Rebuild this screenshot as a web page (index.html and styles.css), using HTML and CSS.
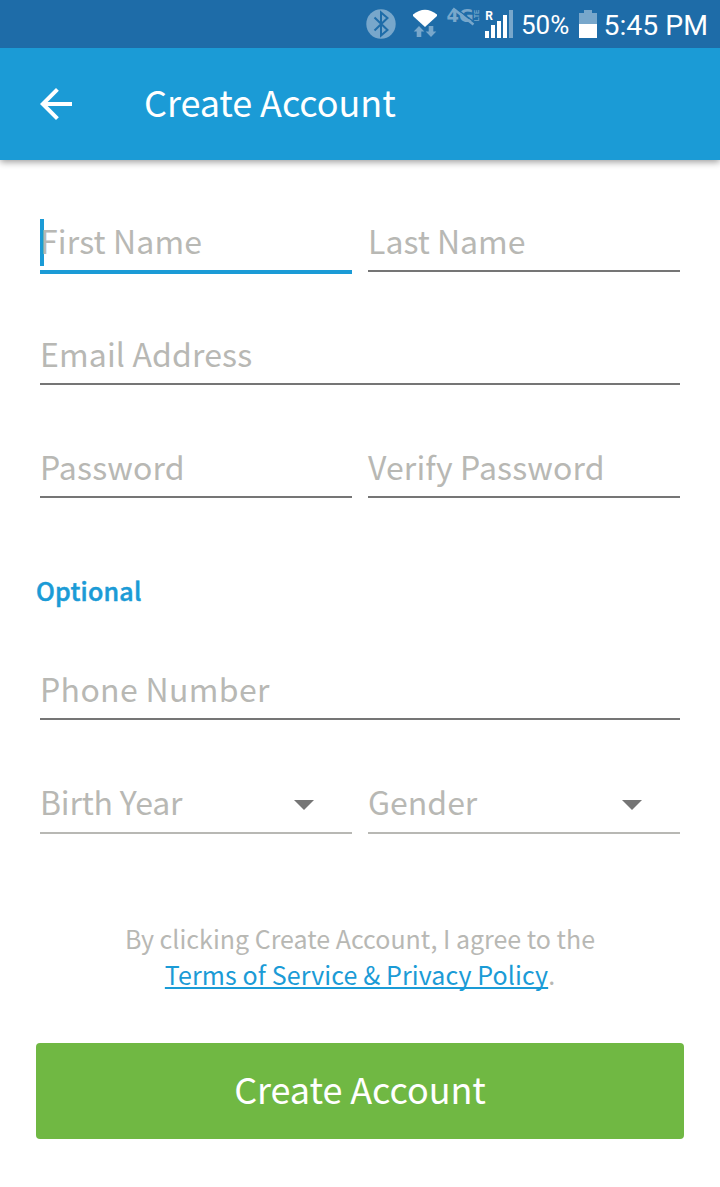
FILE: index.html
```html
<!DOCTYPE html>
<html lang="en">
<head>
<meta charset="utf-8">
<title>Create Account</title>
<link rel="stylesheet" href="styles.css">
</head>
<body>
<div class="statusbar">
  <svg class="status-icons" width="150" height="48" viewBox="365 0 150 48">
    <g class="dim">
      <circle cx="381" cy="24" r="14.7"/>
      <path class="bluetooth" d="M374.5 17.5 L387.5 30 L381 35.5 V12.5 L387.5 18 L374.5 30.5"/>
      <path d="M419 26 L424.300 31.500 H421.300 V37 H416.700 V31.500 H413.700 Z"/>
      <path d="M431 37 L436.300 31.500 H433.300 V26 H428.700 V31.500 H425.700 Z"/>
      <text class="net" x="446.500" y="22" textLength="27" lengthAdjust="spacingAndGlyphs">4G</text>
      <text class="lte" transform="translate(479.300 21.300) rotate(-90)" textLength="11.500" lengthAdjust="spacingAndGlyphs">LTE</text>
      <rect x="509" y="10" width="4" height="28"/>
    </g>
    <path class="slash-gap" d="M456 8.500 L475.500 23"/>
    <path class="slash" d="M453 8.500 L473.500 24.500"/>
    <path class="lit" d="M413 14.500 Q425 5 437 14.500 V16 L425 27 L413 16 Z"/>
    <text class="roam" x="485.200" y="20">R</text>
    <path class="lit" d="M485 31h4v7h-4z M491 25h4v13h-4z M497 21h4v17h-4z M503 15h4v23h-4z"/>
  </svg>
  <span class="percent">50%</span>
  <svg class="battery" width="18" height="28" viewBox="0 0 18 28">
    <path class="dim" d="M5 0h8v3h5v11H0V3h5z"/>
    <path class="lit" d="M0 14h18v14H0z"/>
  </svg>
  <span class="time">5:45 PM</span>
</div>
<header class="appbar">
  <svg class="back" width="32" height="32" viewBox="4 4 16 16"><path d="M20 11H7.830l5.590-5.590L12 4l-8 8 8 8 1.410-1.410L7.830 13H20v-2z"/></svg>
  <h1 class="title">Create Account</h1>
</header>
<main class="form">
  <div class="row">
    <div class="field focused"><span class="hint">First Name</span></div>
    <div class="field last"><span class="hint">Last Name</span></div>
  </div>
  <div class="row"><div class="field"><span class="hint">Email Address</span></div></div>
  <div class="row">
    <div class="field"><span class="hint">Password</span></div>
    <div class="field"><span class="hint">Verify Password</span></div>
  </div>
  <h2 class="section">Optional</h2>
  <div class="row"><div class="field phone"><span class="hint">Phone Number</span></div></div>
  <div class="row selects">
    <div class="field select birth"><span class="hint">Birth Year</span><svg class="arrow" width="20" height="10" viewBox="0 0 20 10"><path d="M0 0h20L10 10z"/></svg></div>
    <div class="field select last"><span class="hint">Gender</span><svg class="arrow" width="20" height="10" viewBox="0 0 20 10"><path d="M0 0h20L10 10z"/></svg></div>
  </div>
  <p class="legal">By clicking Create Account, I agree to the<br><a class="terms">Terms of Service &amp; Privacy Policy</a>.</p>
  <button class="submit">Create Account</button>
</main>
</body>
</html>
```
FILE: styles.css
```css
* { box-sizing: border-box; }
body {
  margin: 0;
  background: #fff;
  font-family: "Noto Sans CJK SC", "Noto Sans", sans-serif;
}
.statusbar {
  display: flex;
  height: 48px;
  padding-left: 365px;
  background: #1e6ca8;
  color: #fff;
  font-family: Roboto, sans-serif;
  white-space: nowrap;
}
.status-icons { flex: none; }
.dim { fill: #78a7cb; }
.lit { fill: #fff; }
.bluetooth { fill: none; stroke: #1e6ca8; stroke-width: 2; }
.net { font: bold 18px "DejaVu Sans", sans-serif; }
.lte { font: bold 7px "Liberation Sans", sans-serif; }
.roam { font: bold 12px Roboto, sans-serif; fill: #fff; }
.slash { stroke: #78a7cb; stroke-width: 2.5; }
.slash-gap { stroke: #1e6ca8; stroke-width: 1.5; }
.percent { width: 58px; margin-left: 6px; font-size: 26px; line-height: 51px; }
.battery { flex: none; margin-top: 10px; }
.time { margin-left: 6.5px; font-size: 28.4px; line-height: 51px; }
.appbar {
  position: relative;
  display: flex;
  align-items: center;
  height: 112px;
  padding-left: 40px;
  background: #1b9bd6;
  color: #fff;
  box-shadow: 0 2px 7px rgba(0, 0, 0, 0.4);
  clip-path: inset(0 0 -12px 0);
}
.back { fill: #fff; }
.title { margin: 0 0 0 72px; padding-bottom: 6px; font-size: 36px; font-weight: 400; line-height: 52px; letter-spacing: -0.08px; }
.form { padding: 59px 36px 0; }
.row { display: flex; gap: 16px; height: 53px; margin: 0 4px 60px; }
.field {
  flex: 1;
  height: 53px;
  border-bottom: 2px solid #757575;
  color: #b8b8b4;
  font-size: 32px;
  line-height: 42px;
  letter-spacing: 0.14px;
}
.last { letter-spacing: 0; }
.phone { letter-spacing: 0.35px; }
.birth { letter-spacing: -0.18px; }
.focused { height: 55px; border-bottom: 4px solid #1b9bd6; }
.focused .hint {
  display: block;
  height: 47px;
  background: linear-gradient(#1b9bd6, #1b9bd6) 0 0 / 4px 47px no-repeat;
}
.section {
  margin: 72px 0 57px;
  color: #1b9bd6;
  font-size: 25px;
  font-weight: 500;
  line-height: 40px;
  letter-spacing: 0.2px;
  -webkit-text-stroke: 0.5px #1b9bd6;
}
.selects { height: 54px; }
.select { display: flex; justify-content: space-between; height: 54px; padding-right: 38px; border-color: #b8b8b4; }
.arrow { margin-top: 20px; fill: #757575; }
.legal { margin: 86px 0 51px; color: #b8b8b4; font-size: 25px; line-height: 36px; text-align: center; }
.terms { color: #1b9bd6; letter-spacing: 0.1px; text-decoration: underline 2px; text-decoration-skip-ink: none; text-underline-offset: 2px; }
.submit {
  display: block;
  width: 100%;
  height: 96px;
  padding: 0 0 6px;
  border: 0;
  border-radius: 4px;
  background: #70b843;
  color: #fff;
  font: 36px/52px "Noto Sans CJK SC", "Noto Sans", sans-serif;
  letter-spacing: -0.08px;
}
```
